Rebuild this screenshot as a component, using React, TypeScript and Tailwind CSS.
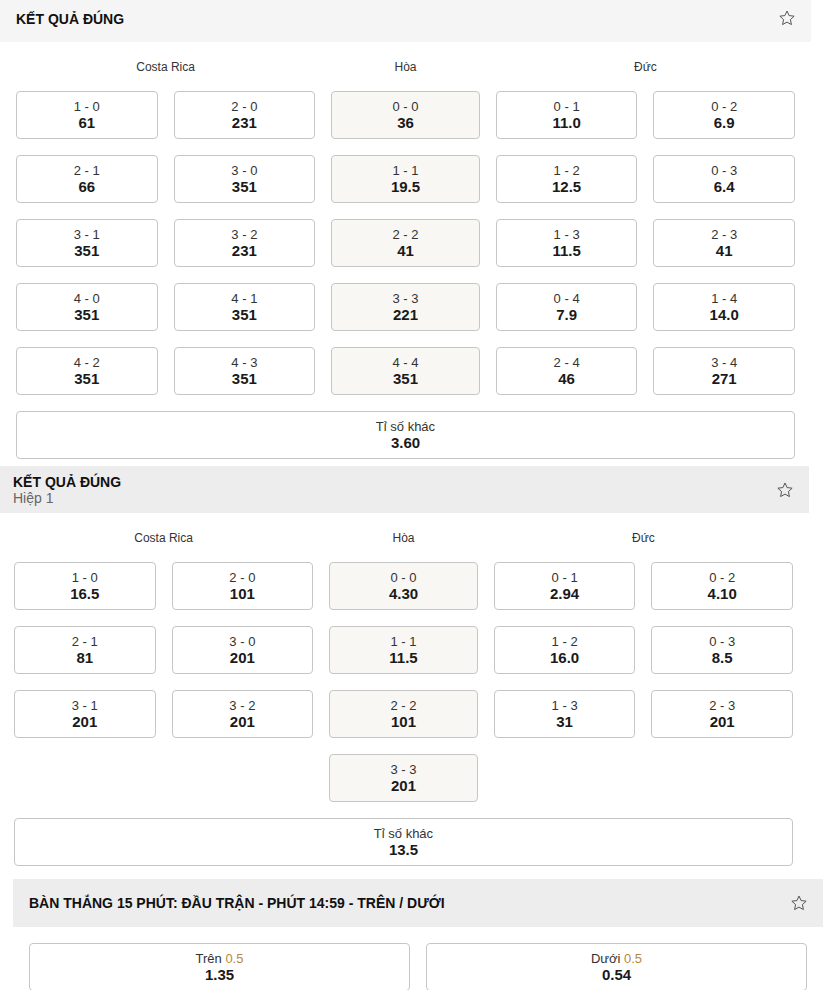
import React from "react";

type C = [string, string] | null;

const StarIcon = () => (
  <svg width="16" height="16" viewBox="0 0 16 16" fill="none" stroke="#555" strokeWidth="1" strokeLinejoin="round">
    <polygon points="8,1 10.12,5.59 15.13,6.18 11.42,9.61 12.41,14.57 8,12.1 3.59,14.57 4.58,9.61 0.87,6.18 5.88,5.59" />
  </svg>
);

const Cell = ({ top, bottom, draw }: { top: React.ReactNode; bottom: string; draw?: boolean }) => (
  <div
    className={
      draw
        ? "h-[48px] rounded-[4px] border border-[#c6c6c6] bg-[#f8f7f3] flex flex-col items-center pt-[8px]"
        : "h-[48px] rounded-[4px] border border-[#c6c6c6] bg-white flex flex-col items-center pt-[8px]"
    }
  >
    <div className="text-[13px] leading-[14px] text-[#333]">{top}</div>
    <div className="text-[15px] leading-[18px] font-bold text-[#1a1a1a]">{bottom}</div>
  </div>
);

const s1: C[][] = [
  [["1 - 0", "61"], ["2 - 0", "231"], ["0 - 0", "36"], ["0 - 1", "11.0"], ["0 - 2", "6.9"]],
  [["2 - 1", "66"], ["3 - 0", "351"], ["1 - 1", "19.5"], ["1 - 2", "12.5"], ["0 - 3", "6.4"]],
  [["3 - 1", "351"], ["3 - 2", "231"], ["2 - 2", "41"], ["1 - 3", "11.5"], ["2 - 3", "41"]],
  [["4 - 0", "351"], ["4 - 1", "351"], ["3 - 3", "221"], ["0 - 4", "7.9"], ["1 - 4", "14.0"]],
  [["4 - 2", "351"], ["4 - 3", "351"], ["4 - 4", "351"], ["2 - 4", "46"], ["3 - 4", "271"]],
];

const s2: C[][] = [
  [["1 - 0", "16.5"], ["2 - 0", "101"], ["0 - 0", "4.30"], ["0 - 1", "2.94"], ["0 - 2", "4.10"]],
  [["2 - 1", "81"], ["3 - 0", "201"], ["1 - 1", "11.5"], ["1 - 2", "16.0"], ["0 - 3", "8.5"]],
  [["3 - 1", "201"], ["3 - 2", "201"], ["2 - 2", "101"], ["1 - 3", "31"], ["2 - 3", "201"]],
  [null, null, ["3 - 3", "201"], null, null],
];

const Grid = ({ rows, other }: { rows: C[][]; other: string }) => (
  <div className="grid grid-cols-[1fr_1fr_1.05fr_1fr_1fr] gap-x-4 gap-y-4 pt-[18px]">
    <div className="col-span-2 text-center text-[12px] leading-[15px] text-[#333]">Costa Rica</div>
    <div className="text-center text-[12px] leading-[15px] text-[#333]">Hòa</div>
    <div className="col-span-2 text-center text-[12px] leading-[15px] text-[#333]">Đức</div>
    {rows.map((row, ri) =>
      row.map((c, ci) =>
        c ? <Cell key={`${ri}-${ci}`} top={c[0]} bottom={c[1]} draw={ci === 2} /> : <div key={`${ri}-${ci}`} />
      )
    )}
    <div className="col-span-5">
      <Cell top="Tỉ số khác" bottom={other} />
    </div>
  </div>
);

export default function App() {
  return (
    <div className="bg-white font-['Liberation_Sans',Arial,sans-serif] text-[#111] w-[828px] h-[990px] overflow-hidden">
      {/* Section 1 */}
      <div className="w-[811px]">
        <div className="h-[42px] bg-[#f5f5f5] flex items-start justify-between pl-4 pr-4">
          <div className="pt-[11px] text-[14px] leading-[16px] font-bold text-[#111]">KẾT QUẢ ĐÚNG</div>
          <div className="pt-[10px]">
            <StarIcon />
          </div>
        </div>
        <div className="pl-4 pr-4 pb-[7px]">
          <Grid rows={s1} other="3.60" />
        </div>
      </div>

      {/* Section 2 */}
      <div className="w-[809px]">
        <div className="h-[47px] bg-[#ededed] flex items-center justify-between pl-[13px] pr-4">
          <div className="flex flex-col pt-[1px]">
            <div className="text-[14px] leading-[16px] font-bold text-[#111]">KẾT QUẢ ĐÚNG</div>
            <div className="text-[14px] leading-[16px] text-[#666]">Hiệp 1</div>
          </div>
          <StarIcon />
        </div>
        <div className="pl-[14px] pr-4 pb-[13px]">
          <Grid rows={s2} other="13.5" />
        </div>
      </div>

      {/* Section 3 */}
      <div className="ml-[13px] w-[810px]">
        <div className="h-[48px] bg-[#ededed] flex items-center justify-between px-4">
          <div className="text-[14px] leading-[16px] font-bold text-[#111]">
            BÀN THẮNG 15 PHÚT: ĐẦU TRẬN - PHÚT 14:59 - TRÊN / DƯỚI
          </div>
          <StarIcon />
        </div>
        <div className="px-4 pt-4 grid grid-cols-2 gap-4">
          <Cell
            top={
              <span>
                Trên <span className="text-[#b7893a]">0.5</span>
              </span>
            }
            bottom="1.35"
          />
          <Cell
            top={
              <span>
                Dưới <span className="text-[#b7893a]">0.5</span>
              </span>
            }
            bottom="0.54"
          />
        </div>
      </div>
    </div>
  );
}
